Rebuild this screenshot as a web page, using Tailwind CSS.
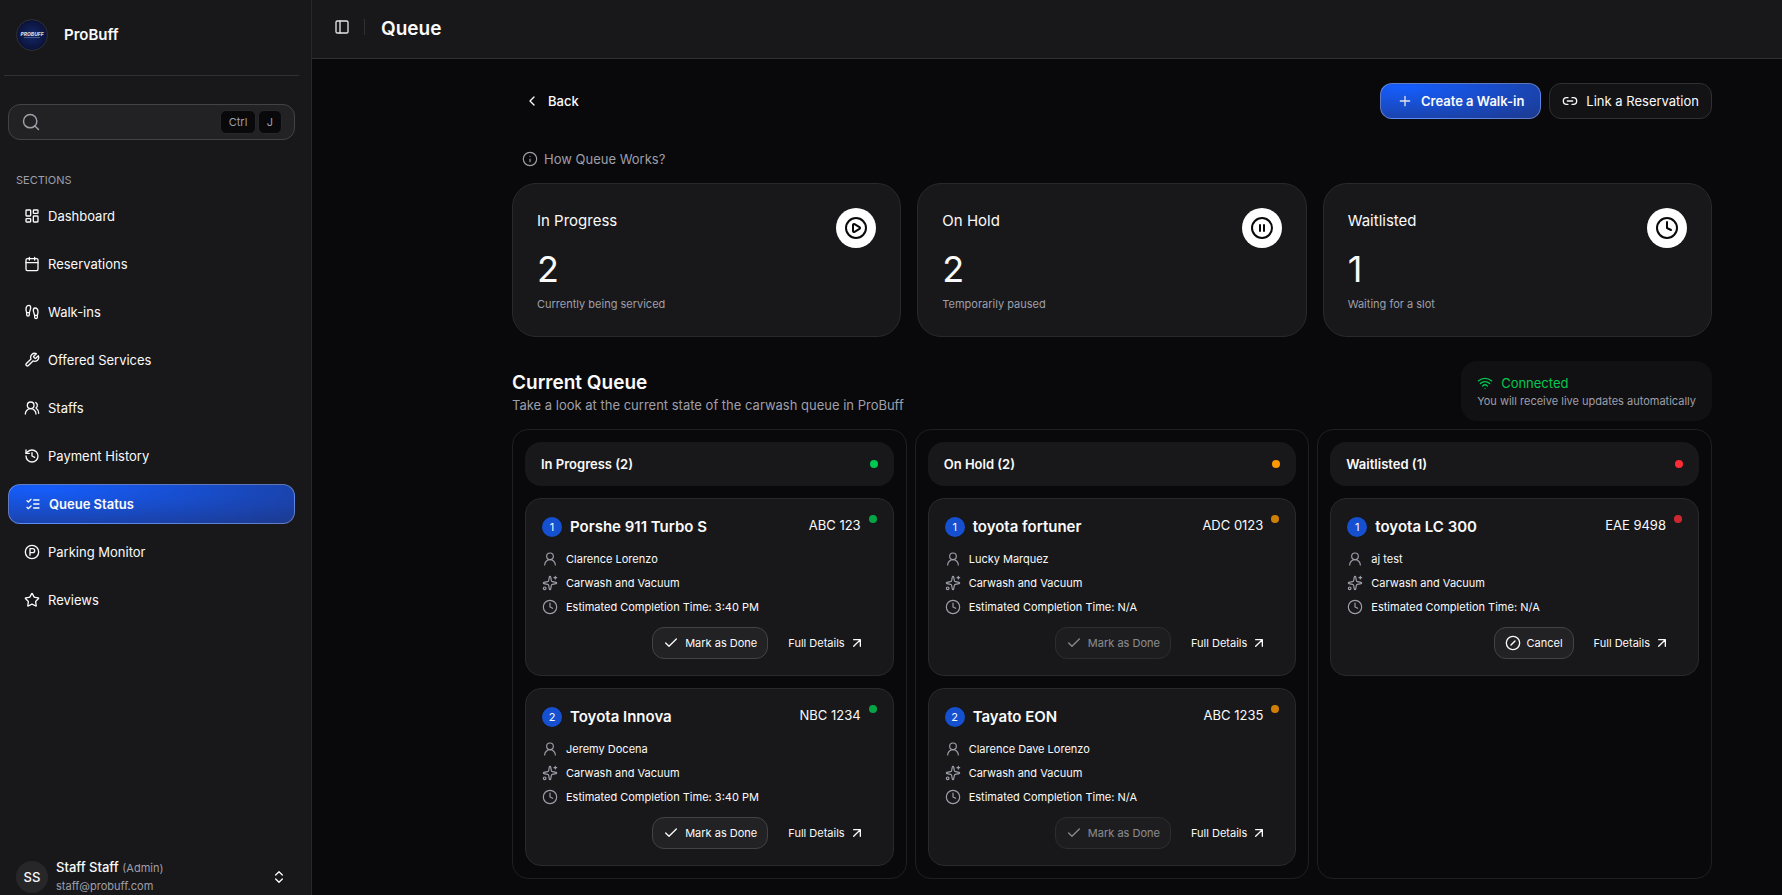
<!DOCTYPE html>
<html lang="en" class="h-full bg-[#09090b] text-zinc-50">
<head>
  <meta charset="UTF-8" />
  <meta name="viewport" content="width=device-width, initial-scale=1.0" />
  <title>Queue - ProBuff</title>

  <!-- Tailwind CSS -->
  <script src="https://cdn.jsdelivr.net/npm/@tailwindcss/browser@4"></script>
</head>
<body class="flex min-h-screen font-['Inter','Liberation_Sans',sans-serif] text-[13px] leading-5">

  <!-- Icons -->
  <svg class="hidden" fill="none">
    <symbol id="i-panel" viewBox="0 0 24 24"><rect width="18" height="18" x="3" y="3" rx="2" /><path d="M9 3v18" /></symbol>
    <symbol id="i-search" viewBox="0 0 24 24"><circle cx="11" cy="11" r="8" /><path d="m21 21-4.3-4.3" /></symbol>
    <symbol id="i-dashboard" viewBox="0 0 24 24"><rect width="7" height="9" x="3" y="3" rx="1" /><rect width="7" height="5" x="14" y="3" rx="1" /><rect width="7" height="9" x="14" y="12" rx="1" /><rect width="7" height="5" x="3" y="16" rx="1" /></symbol>
    <symbol id="i-calendar" viewBox="0 0 24 24"><path d="M8 2v4M16 2v4" /><rect width="18" height="18" x="3" y="4" rx="2" /><path d="M3 10h18" /></symbol>
    <symbol id="i-footprints" viewBox="0 0 24 24"><path d="M4 16v-2.38C4 11.5 2.97 10.5 3 8c.03-2.72 1.49-6 4.5-6C9.37 2 10 3.8 10 5.5c0 3.11-2 5.66-2 8.68V16a2 2 0 1 1-4 0Z" /><path d="M20 20v-2.38c0-2.12 1.03-3.12 1-5.62-.03-2.72-1.49-6-4.5-6C14.63 6 14 7.8 14 9.5c0 3.11 2 5.66 2 8.68V20a2 2 0 1 0 4 0Z" /><path d="M16 17h4M4 13h4" /></symbol>
    <symbol id="i-wrench" viewBox="0 0 24 24"><path d="M14.7 6.3a1 1 0 0 0 0 1.4l1.6 1.6a1 1 0 0 0 1.4 0l3.77-3.77a6 6 0 0 1-7.94 7.94l-6.91 6.91a2.12 2.12 0 0 1-3-3l6.91-6.91a6 6 0 0 1 7.94-7.94l-3.76 3.76z" /></symbol>
    <symbol id="i-users" viewBox="0 0 24 24"><path d="M18 21a8 8 0 0 0-16 0" /><circle cx="10" cy="8" r="5" /><path d="M22 20c0-3.37-2-6.5-4-8a5 5 0 0 0-.45-8.3" /></symbol>
    <symbol id="i-history" viewBox="0 0 24 24"><path d="M3 12a9 9 0 1 0 9-9 9.75 9.75 0 0 0-6.74 2.74L3 8" /><path d="M3 3v5h5M12 7v5l4 2" /></symbol>
    <symbol id="i-checks" viewBox="0 0 24 24"><path d="m3 17 2 2 4-4M3 7l2 2 4-4M13 6h8M13 12h8M13 18h8" /></symbol>
    <symbol id="i-parking" viewBox="0 0 24 24"><circle cx="12" cy="12" r="10" /><path d="M9 17V7h4a3 3 0 0 1 0 6H9" /></symbol>
    <symbol id="i-star" viewBox="0 0 24 24"><path d="M11.525 2.295a.53.53 0 0 1 .95 0l2.31 4.679a2.123 2.123 0 0 0 1.595 1.16l5.166.756a.53.53 0 0 1 .294.904l-3.736 3.638a2.123 2.123 0 0 0-.611 1.878l.882 5.14a.53.53 0 0 1-.771.56l-4.618-2.428a2.122 2.122 0 0 0-1.973 0L6.396 21.01a.53.53 0 0 1-.77-.56l.881-5.139a2.122 2.122 0 0 0-.611-1.879L2.16 9.795a.53.53 0 0 1 .294-.906l5.165-.755a2.122 2.122 0 0 0 1.597-1.16z" /></symbol>
    <symbol id="i-updown" viewBox="0 0 24 24"><path d="m7 15 5 5 5-5M7 9l5-5 5 5" /></symbol>
    <symbol id="i-left" viewBox="0 0 24 24"><path d="m15 18-6-6 6-6" /></symbol>
    <symbol id="i-plus" viewBox="0 0 24 24"><path d="M5 12h14M12 5v14" /></symbol>
    <symbol id="i-link" viewBox="0 0 24 24"><path d="M9 17H7A5 5 0 0 1 7 7h2M15 7h2a5 5 0 1 1 0 10h-2M8 12h8" /></symbol>
    <symbol id="i-info" viewBox="0 0 24 24"><circle cx="12" cy="12" r="10" /><path d="M12 16v-4M12 8h.01" /></symbol>
    <symbol id="i-play" viewBox="0 0 24 24"><circle cx="12" cy="12" r="10" /><path d="M9 9.003a1 1 0 0 1 1.517-.859l4.997 2.997a1 1 0 0 1 0 1.718l-4.997 2.997A1 1 0 0 1 9 14.996z" /></symbol>
    <symbol id="i-pause" viewBox="0 0 24 24"><circle cx="12" cy="12" r="10" /><path d="M10 15V9M14 15V9" /></symbol>
    <symbol id="i-clock" viewBox="0 0 24 24"><circle cx="12" cy="12" r="10" /><path d="M12 6v6l4 2" /></symbol>
    <symbol id="i-wifi" viewBox="0 0 24 24"><path d="M12 20h.01M2 8.82a15 15 0 0 1 20 0M5 12.859a10 10 0 0 1 14 0M8.5 16.429a5 5 0 0 1 7 0" /></symbol>
    <symbol id="i-user" viewBox="0 0 24 24"><circle cx="12" cy="8" r="5" /><path d="M20 21a8 8 0 0 0-16 0" /></symbol>
    <symbol id="i-sparkles" viewBox="0 0 24 24"><path d="M11.017 2.814a1 1 0 0 1 1.966 0l1.051 5.558a2 2 0 0 0 1.594 1.594l5.558 1.051a1 1 0 0 1 0 1.966l-5.558 1.051a2 2 0 0 0-1.594 1.594l-1.051 5.558a1 1 0 0 1-1.966 0l-1.051-5.558a2 2 0 0 0-1.594-1.594l-5.558-1.051a1 1 0 0 1 0-1.966l5.558-1.051a2 2 0 0 0 1.594-1.594z" /><path d="M20 2v4M22 4h-4" /><circle cx="4" cy="20" r="2" /></symbol>
    <symbol id="i-check" viewBox="0 0 24 24"><path d="M20 6 9 17l-5-5" /></symbol>
    <symbol id="i-cancel" viewBox="0 0 24 24"><circle cx="12" cy="12" r="10" /><path d="m15 9-6 6" /></symbol>
    <symbol id="i-arrow" viewBox="0 0 24 24"><path d="M7 7h10v10M7 17 17 7" /></symbol>
  </svg>

  <!-- Sidebar -->
  <aside class="sticky top-0 flex h-screen w-[312px] shrink-0 flex-col border-r border-[#27272a] bg-[#18181b]">
    <div class="mx-1 mr-3 flex h-[76px] items-start border-b border-[#303033] px-3 pt-[19px]">
      <div class="flex h-8 items-center gap-4">
        <svg class="size-8" viewBox="0 0 32 32" aria-hidden="true">
          <defs>
            <radialGradient id="logoBg"><stop offset="0" stop-color="#14286a" /><stop offset="1" stop-color="#0a1236" /></radialGradient>
          </defs>
          <circle cx="16" cy="16" r="15.5" fill="url(#logoBg)" stroke="#303033" />
          <text x="16" y="17" text-anchor="middle" font-size="5" font-weight="800" font-style="italic" fill="#d4d4d8">PROBUFF</text>
          <path d="M8 18.500h16" stroke="#6b7aa8" stroke-width=".6" />
        </svg>
        <span class="text-[15px] leading-6 font-semibold">ProBuff</span>
      </div>
    </div>

    <div class="px-2 pr-4 pt-7">
      <div class="flex h-9 items-center gap-1 rounded-xl border border-[#434346] bg-[#222225] px-3">
        <svg class="size-5 shrink-0 fill-none stroke-zinc-400 stroke-[1.75]" stroke-linecap="round" stroke-linejoin="round"><use href="#i-search" /></svg>
        <input type="text" aria-label="Search" class="min-w-0 flex-1 bg-transparent outline-none" />
        <span class="flex gap-0.5">
          <kbd class="flex h-6 w-9 items-center justify-center rounded-md border border-[#27272a] bg-[#09090b] font-[Inter] text-[11px] text-zinc-400">Ctrl</kbd>
          <kbd class="flex h-6 w-6 items-center justify-center rounded-md border border-[#27272a] bg-[#09090b] font-[Inter] text-[11px] text-zinc-400">J</kbd>
        </span>
      </div>
    </div>

    <div class="flex-1 px-2 pr-4 pt-7">
      <h2 class="mb-1 flex h-6 items-center px-2 text-[11px] text-zinc-400">SECTIONS</h2>
      <nav id="nav" class="flex flex-col gap-2"></nav>
    </div>

    <button class="mr-4 ml-2 flex items-center gap-2 px-2 text-left">
      <span class="flex size-8 items-center justify-center rounded-full bg-[#27272a] font-medium">SS</span>
      <span class="flex-1">
        <span class="block leading-[18px]"><span class="font-medium">Staff Staff</span> <span class="text-[11px] text-zinc-400">(Admin)</span></span>
        <span class="block text-[11px] leading-[18px] text-zinc-400">staff@probuff.com</span>
      </span>
      <svg class="size-4 fill-none stroke-current stroke-2" stroke-linecap="round" stroke-linejoin="round"><use href="#i-updown" /></svg>
    </button>
  </aside>

  <!-- Main -->
  <div class="flex min-w-0 flex-1 flex-col">
    <header class="flex h-[59px] items-center border-b border-[#303033] bg-[#18181b] px-[22px] pb-1">
      <button aria-label="Toggle sidebar"><svg class="size-4 fill-none stroke-zinc-200 stroke-2" stroke-linecap="round" stroke-linejoin="round"><use href="#i-panel" /></svg></button>
      <span class="mr-4 ml-3.5 h-4 w-px bg-[#303033]"></span>
      <h1 class="pt-1 text-[19px] leading-7 font-semibold">Queue</h1>
    </header>

    <main class="ml-auto flex w-full max-w-[1270px] flex-1 flex-col pt-6 pr-[70px] pb-4">
      <div class="flex items-center justify-between">
        <button class="flex h-9 items-center gap-2 px-3 font-medium">
          <svg class="size-4 fill-none stroke-current stroke-2" stroke-linecap="round" stroke-linejoin="round"><use href="#i-left" /></svg>Back
        </button>
        <div class="flex gap-2">
          <button class="flex h-9 items-center gap-2 rounded-xl border border-white/30 bg-radial-[at_15%_10%] from-[#155dfc] to-[#1c398e] px-4 font-semibold">
            <svg class="size-4 fill-none stroke-zinc-200 stroke-2" stroke-linecap="round" stroke-linejoin="round"><use href="#i-plus" /></svg>Create a Walk-in
          </button>
          <button class="flex h-9 items-center gap-2 rounded-xl border border-[#303033] bg-[#131316] px-3">
            <svg class="size-4 fill-none stroke-current stroke-2" stroke-linecap="round" stroke-linejoin="round"><use href="#i-link" /></svg>Link a Reservation
          </button>
        </div>
      </div>

      <button class="mt-6 flex h-8 items-center gap-1.5 self-start px-2.5 text-zinc-400">
        <svg class="size-4 fill-none stroke-current stroke-[1.75]" stroke-linecap="round" stroke-linejoin="round"><use href="#i-info" /></svg>How Queue Works?
      </button>

      <section id="stats" class="mt-2 grid grid-cols-3 gap-4"></section>

      <section class="mt-6 flex items-center justify-between">
        <div>
          <h2 class="pt-1 text-[19px] leading-6 font-semibold">Current Queue</h2>
          <p class="text-zinc-400">Take a look at the current state of the carwash queue in ProBuff</p>
        </div>
        <div class="rounded-2xl bg-[#111113] px-4 py-3">
          <p class="flex items-center gap-2 text-[#00c950]">
            <svg class="size-4 fill-none stroke-current stroke-2" stroke-linecap="round" stroke-linejoin="round"><use href="#i-wifi" /></svg>Connected
          </p>
          <p class="text-[11px] leading-4 text-zinc-400">You will receive live updates automatically</p>
        </div>
      </section>

      <section id="queue" class="mt-2 grid flex-1 grid-cols-3 gap-2"></section>
    </main>
  </div>

  <!-- Scripts -->
  <script>
    const navItems = [
      ['dashboard', 'Dashboard'],
      ['calendar', 'Reservations'],
      ['footprints', 'Walk-ins'],
      ['wrench', 'Offered Services'],
      ['users', 'Staffs'],
      ['history', 'Payment History'],
      ['checks', 'Queue Status'],
      ['parking', 'Parking Monitor'],
      ['star', 'Reviews']
    ];

    const stats = [
      { title: 'In Progress', value: 2, note: 'Currently being serviced', icon: 'play' },
      { title: 'On Hold', value: 2, note: 'Temporarily paused', icon: 'pause' },
      { title: 'Waitlisted', value: 1, note: 'Waiting for a slot', icon: 'clock' }
    ];

    const columns = [
      {
        title: 'In Progress', dot: 'bg-[#00c950]', action: 'Mark as Done', icon: 'check', disabled: false,
        cars: [
          { car: 'Porshe 911 Turbo S', plate: 'ABC 123', owner: 'Clarence Lorenzo', eta: '3:40 PM' },
          { car: 'Toyota Innova', plate: 'NBC 1234', owner: 'Jeremy Docena', eta: '3:40 PM' }
        ]
      },
      {
        title: 'On Hold', dot: 'bg-[#fe9a00]', action: 'Mark as Done', icon: 'check', disabled: true,
        cars: [
          { car: 'toyota fortuner', plate: 'ADC 0123', owner: 'Lucky Marquez', eta: 'N/A' },
          { car: 'Tayato EON', plate: 'ABC 1235', owner: 'Clarence Dave Lorenzo', eta: 'N/A' }
        ]
      },
      {
        title: 'Waitlisted', dot: 'bg-[#fb2c36]', action: 'Cancel', icon: 'cancel', disabled: false,
        cars: [
          { car: 'toyota LC 300', plate: 'EAE 9498', owner: 'aj test', eta: 'N/A' }
        ]
      }
    ];

    function icon(name, cls) {
      return `<svg class="shrink-0 fill-none ${cls}" stroke-linecap="round" stroke-linejoin="round"><use href="#i-${name}" /></svg>`;
    }

    document.getElementById('nav').innerHTML = navItems.map(([name, label]) => {
      const active = label === 'Queue Status';
      const look = active
        ? 'border border-white/30 bg-radial-[at_12%_10%] from-[#155dfc] to-[#1c398e] font-semibold'
        : '';
      return `<a href="#" class="flex h-10 items-center gap-2 rounded-xl px-4 ${look}">${icon(name, 'size-4 stroke-current stroke-2')}${label}</a>`;
    }).join('');

    document.getElementById('stats').innerHTML = stats.map(s => `
      <div class="rounded-3xl border border-[#29292c] bg-[#18181b] p-6">
        <div class="flex h-10 items-start justify-between">
          <h3 class="text-[15px] leading-[26px]">${s.title}</h3>
          <span class="flex size-10 items-center justify-center rounded-full bg-white">${icon(s.icon, 'size-6 stroke-[#09090b] stroke-2')}</span>
        </div>
        <p class="text-[36px] leading-[42px]">${s.value}</p>
        <p class="mt-1.5 text-[11px] leading-4 text-zinc-400">${s.note}</p>
      </div>`).join('');

    const rowIcon = 'size-4 stroke-zinc-400 stroke-[1.75]';

    function card(c, i, col) {
      return `
        <article class="rounded-2xl border border-[#29292c] bg-[#18181b] p-4">
          <div class="flex items-start justify-between">
            <h4 class="flex items-center gap-2 text-[15px] leading-6 font-semibold">
              <span class="flex size-5 items-center justify-center rounded-full bg-[#1550d0] text-[11px] font-normal">${i + 1}</span>${c.car}
            </h4>
            <span class="flex items-start gap-2">${c.plate}<i class="size-2 rounded-full opacity-80 ${col.dot}"></i></span>
          </div>
          <ul class="mt-3 flex flex-col gap-2 text-[11px] leading-4">
            <li class="flex gap-2">${icon('user', rowIcon)}${c.owner}</li>
            <li class="flex gap-2">${icon('sparkles', rowIcon)}Carwash and Vacuum</li>
            <li class="flex gap-2">${icon('clock', rowIcon)}Estimated Completion Time: ${c.eta}</li>
          </ul>
          <div class="mt-3 flex justify-end gap-2 text-[11px]">
            <button class="flex h-8 items-center gap-1.5 rounded-xl border border-[#434346] bg-[#222225] px-2.5 disabled:opacity-50" ${col.disabled ? 'disabled' : ''}>
              ${icon(col.icon, 'size-4 stroke-current stroke-2')}${col.action}
            </button>
            <a href="#" class="flex h-8 items-center gap-1 px-3">Full Details${icon('arrow', 'size-4 stroke-current stroke-2')}</a>
          </div>
        </article>`;
    }

    document.getElementById('queue').innerHTML = columns.map(col => `
      <div class="flex flex-col gap-3 rounded-2xl border border-[#1f1f22] p-3">
        <div class="flex h-11 items-center justify-between rounded-2xl bg-[#18181b] px-4">
          <h3 class="font-semibold">${col.title} (${col.cars.length})</h3>
          <i class="size-2 rounded-full ${col.dot}"></i>
        </div>
        ${col.cars.map((c, i) => card(c, i, col)).join('')}
      </div>`).join('');
  </script>
</body>
</html>
